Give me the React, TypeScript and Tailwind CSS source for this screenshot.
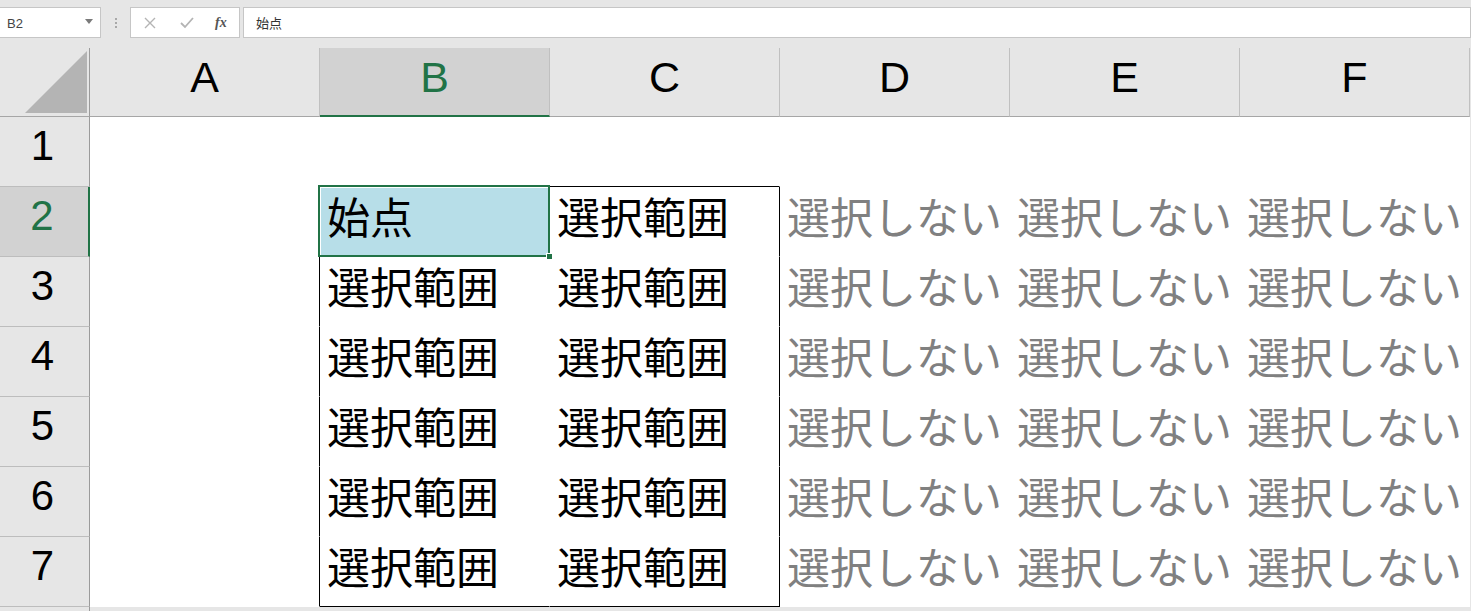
const COLS = ['A', 'B', 'C', 'D', 'E', 'F']
const ROWS = [1, 2, 3, 4, 5, 6, 7]

function cellText(row: number, col: number) {
  if (row < 2) return null
  if (col === 0) return null
  if (row === 2 && col === 1) return '始点'
  if (col <= 2) return '選択範囲'
  return '選択しない'
}

function FormulaBar() {
  return (
    <div className="h-[48px] flex items-start pt-[7px]">
      <div className="-ml-px w-[102px] h-[31px] bg-white border border-[#c6c6c6] flex items-center justify-between pl-[7px] pr-[7px]">
        <span className="text-[13px] text-[#444] pt-[3px]">B2</span>
        <svg width="8" height="5" viewBox="0 0 8 5" className="mb-[2px]">
          <path d="M0 0h8L4 5z" fill="#7a7a7a" />
        </svg>
      </div>
      <div className="w-[29px] h-[31px] flex flex-col items-center justify-center gap-[2px]">
        <span className="w-[2px] h-[2px] bg-[#a8a8a8]" />
        <span className="w-[2px] h-[2px] bg-[#a8a8a8]" />
        <span className="w-[2px] h-[2px] bg-[#a8a8a8]" />
      </div>
      <div className="w-[110px] h-[31px] bg-white border border-[#c6c6c6] flex items-center pl-[13px]">
        <svg width="12" height="12" viewBox="0 0 12 12">
          <path d="M1 1l10 10M11 1L1 11" stroke="#b4b4b4" strokeWidth="1.4" />
        </svg>
        <svg width="14" height="12" viewBox="0 0 14 12" className="ml-[24px]">
          <path d="M1 6l4 4 8-9" stroke="#b4b4b4" strokeWidth="1.8" fill="none" />
        </svg>
        <span className="ml-[21px] text-[14px] italic font-bold text-[#555] font-['Liberation_Serif',serif]">fx</span>
      </div>
      <div className="ml-[3px] flex-1 h-[31px] bg-white border border-[#c6c6c6] flex items-center pl-[12px]">
        <span className="text-[13px] text-[#333] font-['Noto_Sans_CJK_JP',sans-serif]">始点</span>
      </div>
    </div>
  )
}

function Corner() {
  return (
    <div className="h-[69px] bg-[#e6e6e6] border-r border-b border-r-[#9b9b9b] border-b-[#a6a6a6] flex items-end justify-end pr-[2px] pb-[3px]">
      <svg width="62" height="62" viewBox="0 0 62 62">
        <path d="M62 0V62H0z" fill="#b4b4b4" />
      </svg>
    </div>
  )
}

function ColHeader({ label, selected }: { label: string; selected: boolean }) {
  return (
    <div
      className={
        selected
          ? 'h-[69px] bg-[#d2d2d2] border-r border-r-[#c0c0c0] border-b-2 border-b-[#217346] text-[#217346] flex items-center justify-center text-[43px] pb-[9px]'
          : 'h-[69px] bg-[#e6e6e6] border-r border-r-[#c0c0c0] border-b border-b-[#a6a6a6] text-black flex items-center justify-center text-[43px] pb-[10px]'
      }
    >
      {label}
    </div>
  )
}

function RowHeader({ n, selected }: { n: number; selected: boolean }) {
  return (
    <div
      className={
        selected
          ? 'h-[70px] bg-[#d2d2d2] border-r-2 border-r-[#217346] border-b border-b-[#bdbdbd] text-[#217346] flex items-center justify-center text-[42px] pb-[13px] pr-[4px]'
          : 'h-[70px] bg-[#e6e6e6] border-r border-r-[#9b9b9b] border-b border-b-[#bdbdbd] text-black flex items-center justify-center text-[42px] pb-[13px] pr-[4px]'
      }
    >
      {n}
    </div>
  )
}

function Cell({ row, col }: { row: number; col: number }) {
  const inBox = row >= 2 && (col === 1 || col === 2)
  const rightBlack = row >= 2 && (col === 0 || col === 2)
  const bottomBlack = (row === 1 || row === 7) && (col === 1 || col === 2)
  const text = cellText(row, col)
  const active = row === 2 && col === 1

  return (
    <div
      className={[
        'relative h-[70px] border-r border-b flex items-center pl-[7px] pb-[12px] text-[43px] leading-none whitespace-nowrap',
        "font-['Noto_Sans_CJK_JP',sans-serif]",
        rightBlack ? 'border-r-black' : 'border-r-white',
        bottomBlack ? 'border-b-black' : 'border-b-white',
        inBox ? 'text-black' : 'text-[#808080]',
        active ? 'bg-white z-10' : 'bg-white',
      ].join(' ')}
    >
      {active && (
        <>
          <div className="absolute inset-px bg-[#b7dee8]" />
          <div className="absolute -left-[2px] -top-[2px] -right-[1px] -bottom-[1px] border-2 border-[#217346]" />
          <div className="absolute -right-[4px] -bottom-[4px] w-[7px] h-[7px] bg-[#217346] border border-white" />
        </>
      )}
      <span className="relative">{text}</span>
    </div>
  )
}

export default function App() {
  return (
    <div className="w-[1471px] h-[611px] overflow-hidden bg-[#e6e6e6] font-['Liberation_Sans',Arial,sans-serif]">
      <FormulaBar />
      <div className="grid grid-cols-[90px_repeat(6,230px)]">
        <Corner />
        {COLS.map((c) => (
          <ColHeader key={c} label={c} selected={c === 'B'} />
        ))}
        {ROWS.map((r) => (
          <div key={r} className="contents">
            <RowHeader n={r} selected={r === 2} />
            {COLS.map((c, i) => (
              <Cell key={c} row={r} col={i} />
            ))}
          </div>
        ))}
        <div className="h-[70px] bg-[#e6e6e6] border-r border-r-[#9b9b9b]" />
      </div>
    </div>
  )
}
